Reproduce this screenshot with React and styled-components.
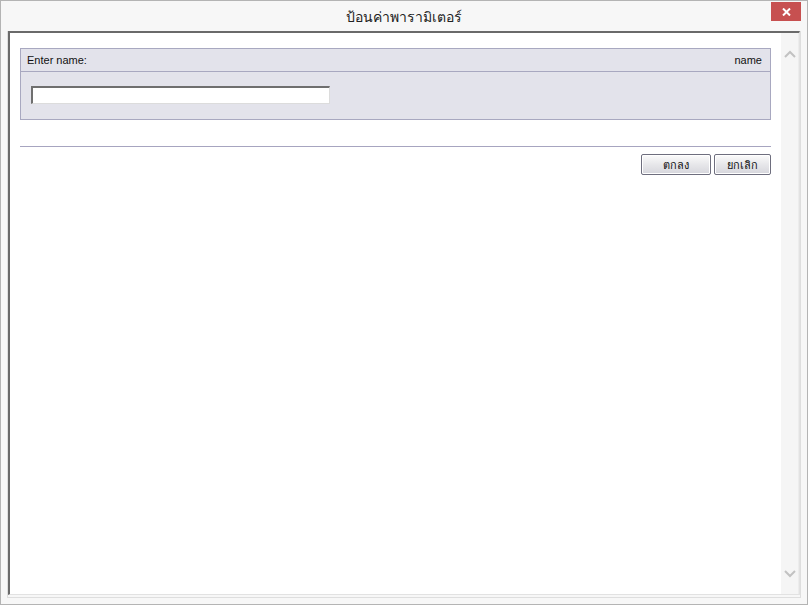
import React from "react";
import styled, { createGlobalStyle } from "styled-components";

const GlobalStyle = createGlobalStyle`
  html, body {
    margin: 0;
    padding: 0;
    background: #ffffff;
  }
  * { box-sizing: border-box; }
`;

const Window = styled.div`
  width: 808px;
  height: 605px;
  border: 1px solid #b4b4b4;
  background: #f7f7f7;
  display: flex;
  flex-direction: column;
  font-family: "Liberation Sans", "Noto Sans", sans-serif;
`;

const TitleBar = styled.div`
  height: 30px;
  display: grid;
  grid-template-columns: 1fr auto 1fr;
  align-items: start;
`;

const Title = styled.div`
  grid-column: 2;
  padding-top: 5px;
  font-family: "Noto Sans", "DejaVu Sans", sans-serif;
  font-size: 14px;
  color: #222;
`;

const CloseButton = styled.div`
  grid-column: 3;
  justify-self: end;
  width: 30px;
  height: 19px;
  margin: 1px 6px 0 0;
  background: #c75050;
  display: flex;
  align-items: center;
  justify-content: center;
`;

const ClientFrame = styled.div`
  flex: 1;
  margin: 0 6px 6px 6px;
  border: 1px solid #dedede;
  border-top: none;
  display: flex;
`;

const Client = styled.div`
  flex: 1;
  display: flex;
  border-top: 2px solid #6a6a6a;
  border-left: 2px solid #6a6a6a;
  border-right: 1px solid #e2e2e2;
  border-bottom: 1px solid #e2e2e2;
  margin-bottom: 2px;
`;

const Content = styled.div`
  flex: 1;
  background: #ffffff;
  padding: 15px 10px 0 10px;
`;

const Scrollbar = styled.div`
  width: 18px;
  background: #f5f5f5;
  border-right: 1px solid #ececec;
  display: flex;
  flex-direction: column;
  justify-content: space-between;
  align-items: center;
  padding: 17px 0 16px;
`;

const Panel = styled.div`
  border: 1px solid #a8a8c0;
  background: #e3e3eb;
`;

const PanelHeader = styled.div`
  height: 23px;
  display: flex;
  justify-content: space-between;
  align-items: center;
  padding: 0 8px 0 6px;
  border-bottom: 1px solid #a8a8c0;
  font-size: 11px;
  color: #111;
`;

const PanelBody = styled.div`
  height: 47px;
  padding: 14px 0 0 10px;
`;

const TextInput = styled.input`
  display: block;
  width: 299px;
  height: 18px;
  margin: 0;
  padding: 0 3px;
  background: #ffffff;
  border-top: 2px solid #6f6f6f;
  border-left: 2px solid #6f6f6f;
  border-right: 1px solid #dcdcdc;
  border-bottom: 1px solid #dcdcdc;
  font-size: 11px;
  outline: none;
`;

const Divider = styled.hr`
  margin: 26px 0 0;
  border: none;
  border-top: 1px solid #a7a5c0;
`;

const ButtonRow = styled.div`
  display: flex;
  justify-content: flex-end;
  gap: 3px;
  margin-top: 7px;
`;

const Button = styled.button`
  width: ${(p) => p.w}px;
  height: 21px;
  padding: 0;
  border: 1px solid #6e6e7e;
  border-radius: 2px;
  background: linear-gradient(#fbfbfb, #e7e7ea 50%, #d6d6dc);
  box-shadow: inset 0 0 0 1px #ffffff;
  font-family: "Noto Sans", "DejaVu Sans", sans-serif;
  font-size: 11px;
  color: #111;
`;

function Chevron({ up }) {
  return (
    <svg width="12" height="8" viewBox="0 0 12 8">
      <path
        d={up ? "M1 7 L6 2 L11 7" : "M1 1 L6 6 L11 1"}
        fill="none"
        stroke="#c2c2c2"
        strokeWidth="2"
      />
    </svg>
  );
}

export default function App() {
  return (
    <>
      <GlobalStyle />
      <Window>
        <TitleBar>
          <Title>ป้อนค่าพารามิเตอร์</Title>
          <CloseButton>
            <svg width="9" height="8" viewBox="0 0 9 8">
              <path d="M1 0.5 L8 7.5 M8 0.5 L1 7.5" stroke="#fff" strokeWidth="2" />
            </svg>
          </CloseButton>
        </TitleBar>
        <ClientFrame>
          <Client>
            <Content>
              <Panel>
                <PanelHeader>
                  <span>Enter name:</span>
                  <span>name</span>
                </PanelHeader>
                <PanelBody>
                  <TextInput type="text" />
                </PanelBody>
              </Panel>
              <Divider />
              <ButtonRow>
                <Button w={70}>ตกลง</Button>
                <Button w={57}>ยกเลิก</Button>
              </ButtonRow>
            </Content>
            <Scrollbar>
              <Chevron up />
              <Chevron />
            </Scrollbar>
          </Client>
        </ClientFrame>
      </Window>
    </>
  );
}
